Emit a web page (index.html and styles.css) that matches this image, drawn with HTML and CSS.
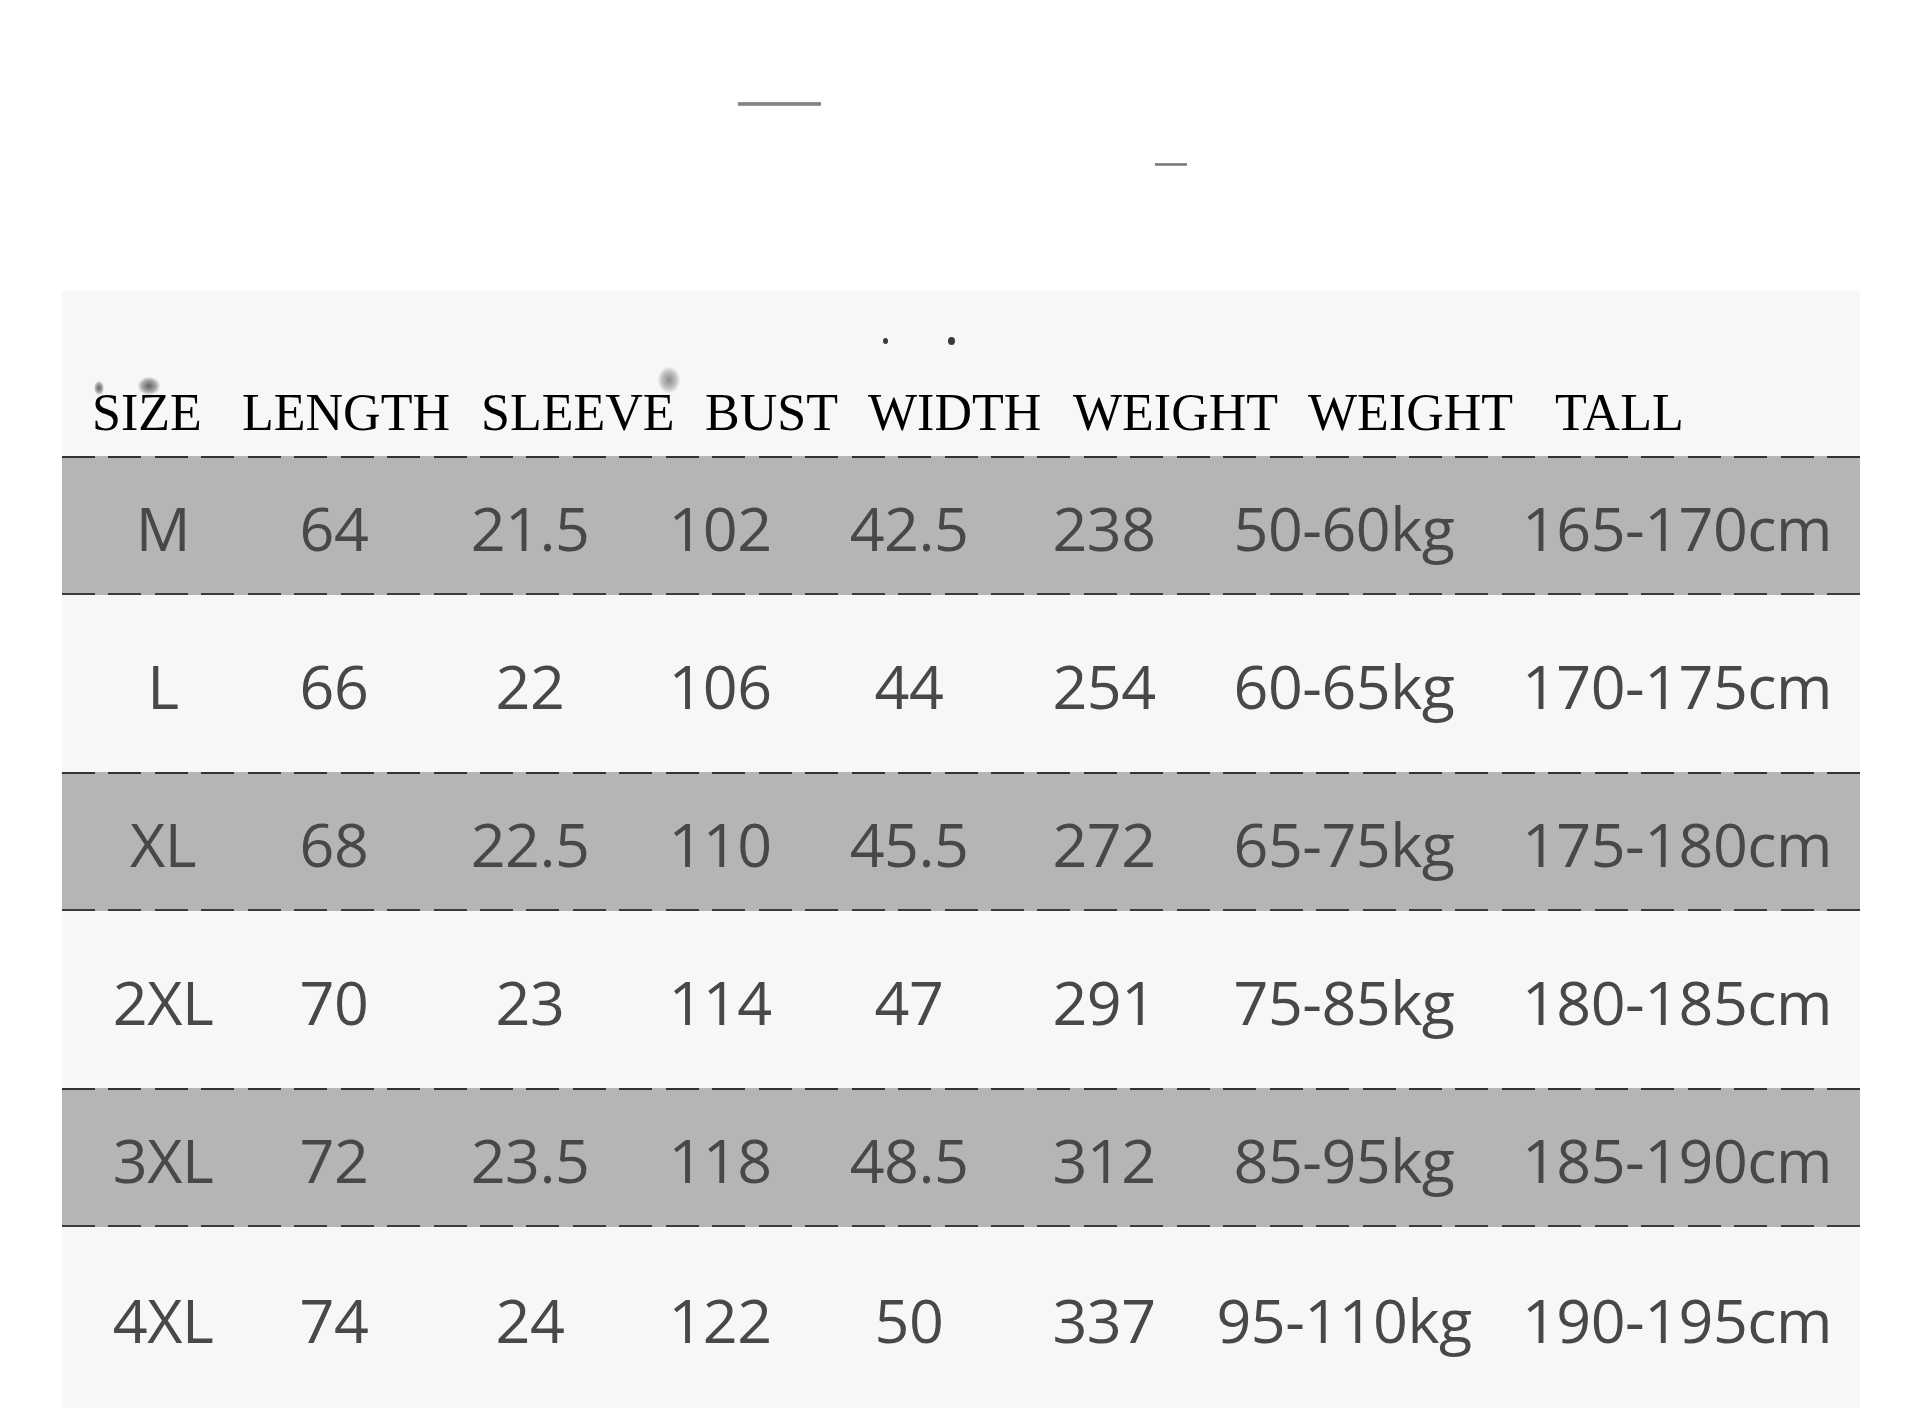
FILE: index.html
```html
<!DOCTYPE html>
<html lang="en">
<head>
<meta charset="utf-8">
<title>Size Chart</title>
<link rel="stylesheet" href="styles.css">
</head>
<body>
<div class="top">
  <span class="mark mark-a"></span>
  <span class="mark mark-b"></span>
</div>
<section class="panel">
  <div class="head">
    <span class="hw w1">SIZE</span>
    <span class="hw w2">LENGTH</span>
    <span class="hw w3">SLEEVE</span>
    <span class="hw w4">BUST</span>
    <span class="hw w5">WIDTH</span>
    <span class="hw w6">WEIGHT</span>
    <span class="hw w7">WEIGHT</span>
    <span class="hw w8">TALL</span>
    <span class="speck s1"></span>
    <span class="speck s2"></span>
    <span class="smudge m1"></span>
    <span class="smudge m2"></span>
    <span class="smudge m3"></span>
  </div>
  <div class="row shade"><span>M</span><span>64</span><span>21.5</span><span>102</span><span>42.5</span><span>238</span><span>50-60kg</span><span>165-170cm</span></div>
  <div class="row plain"><span>L</span><span>66</span><span>22</span><span>106</span><span>44</span><span>254</span><span>60-65kg</span><span>170-175cm</span></div>
  <div class="row shade"><span>XL</span><span>68</span><span>22.5</span><span>110</span><span>45.5</span><span>272</span><span>65-75kg</span><span>175-180cm</span></div>
  <div class="row plain"><span>2XL</span><span>70</span><span>23</span><span>114</span><span>47</span><span>291</span><span>75-85kg</span><span>180-185cm</span></div>
  <div class="row shade"><span>3XL</span><span>72</span><span>23.5</span><span>118</span><span>48.5</span><span>312</span><span>85-95kg</span><span>185-190cm</span></div>
  <div class="row plain last"><span>4XL</span><span>74</span><span>24</span><span>122</span><span>50</span><span>337</span><span>95-110kg</span><span>190-195cm</span></div>
</section>
</body>
</html>
```

FILE: styles.css
```css
html, body {
  margin: 0;
  padding: 0;
  background: #ffffff;
}

body {
  width: 1920px;
  height: 1408px;
  overflow: hidden;
}

.top {
  position: relative;
  height: 291px;
}

.mark {
  position: absolute;
  display: block;
  background: linear-gradient(to bottom, #9a9a9a, #7a7a7a 50%, #a5a5a5);
}

.mark-a {
  left: 738px;
  top: 102px;
  width: 83px;
  height: 4px;
}

.mark-b {
  left: 1155px;
  top: 163px;
  width: 32px;
  height: 3px;
}

.panel {
  margin-left: 62px;
  width: 1798px;
  height: 1117px;
  background: #f7f7f7;
}

.head {
  position: relative;
  height: 165px;
  display: flex;
  align-items: flex-end;
  padding-left: 30px;
  padding-bottom: 17px;
  box-sizing: border-box;
  font-family: "Liberation Serif", "Times New Roman", serif;
  font-size: 52px;
  line-height: 52px;
  color: #000000;
}

.hw {
  flex: none;
  white-space: nowrap;
}

.w1 { width: 150px; }
.w2 { width: 239px; }
.w3 { width: 224px; }
.w4 { width: 163px; }
.w5 { width: 205px; }
.w6 { width: 235px; }
.w7 { width: 247px; }
.w8 { width: 140px; }

.speck {
  position: absolute;
  border-radius: 50%;
  background: #3a3a3a;
}

.s1 { left: 821px; top: 47px; width: 5px; height: 6px; }
.s2 { left: 886px; top: 46px; width: 7px; height: 8px; }

.smudge {
  position: absolute;
  border-radius: 50%;
  background: radial-gradient(ellipse at center, rgba(70,70,70,0.85) 0%, rgba(90,90,90,0.5) 45%, rgba(140,140,140,0) 75%);
}

.m1 { left: 32px; top: 90px; width: 10px; height: 14px; }
.m2 { left: 76px; top: 86px; width: 22px; height: 18px; }
.m3 { left: 596px; top: 76px; width: 22px; height: 26px; opacity: 0.7; }

.row {
  display: grid;
  grid-template-columns: 202px 140px 252px 128px 250px 140px 340px 326px;
  align-items: center;
  padding-top: 4px;
  box-sizing: border-box;
  font-family: "Open Sans", "Noto Sans", sans-serif;
  font-size: 61px;
  line-height: 61px;
  letter-spacing: -0.5px;
  color: #484848;
}

.row span {
  text-align: center;
  white-space: nowrap;
}

.shade {
  height: 139px;
  background-color: #b5b5b5;
  background-image:
    repeating-linear-gradient(to right, #333333 0, #333333 33px, transparent 33px, transparent 46.45px),
    repeating-linear-gradient(to right, #3a3a3a 0, #3a3a3a 33px, transparent 33px, transparent 46.45px);
  background-size: 100% 2px, 100% 2px;
  background-position: left top, left bottom;
  background-repeat: no-repeat;
}

.plain {
  height: 177px;
}

.last {
  height: 181px;
}
```
